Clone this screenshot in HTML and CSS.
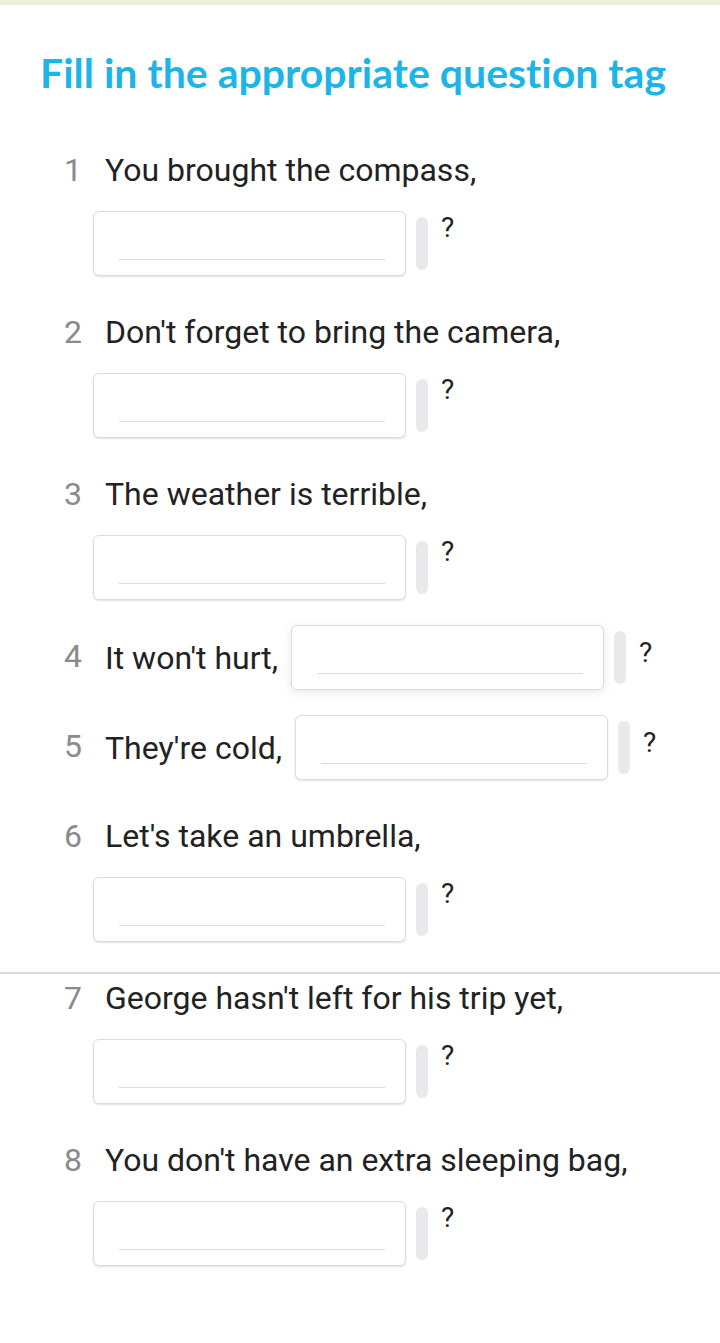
FILE: index.html
```html
<!DOCTYPE html>
<html lang="en">

<head>
    <meta charset="UTF-8" />
    <meta name="viewport" content="width=device-width, initial-scale=1.0" />
    <title>Question tags</title>
    <link rel="stylesheet" href="styles.css">
</head>

<body>
    <div class="top-bar"></div>

    <h1 class="title">Fill in the appropriate question tag</h1>

    <ol class="tasks">
        <li class="task">
            <span class="num">1</span>
            <div class="content">
                <span class="text">You brought the compass,</span>
                <span class="answer">
                    <span class="box"><span class="line"></span></span>
                    <span class="pill"></span>
                    <span class="mark">?</span>
                </span>
            </div>
        </li>
        <li class="task">
            <span class="num">2</span>
            <div class="content">
                <span class="text">Don't forget to bring the camera,</span>
                <span class="answer">
                    <span class="box"><span class="line"></span></span>
                    <span class="pill"></span>
                    <span class="mark">?</span>
                </span>
            </div>
        </li>
        <li class="task">
            <span class="num">3</span>
            <div class="content">
                <span class="text">The weather is terrible,</span>
                <span class="answer">
                    <span class="box"><span class="line"></span></span>
                    <span class="pill"></span>
                    <span class="mark">?</span>
                </span>
            </div>
        </li>
        <li class="task inline">
            <span class="num">4</span>
            <div class="content">
                <span class="text">It won't hurt,</span>
                <span class="answer">
                    <span class="box focus"><span class="line"></span></span>
                    <span class="pill"></span>
                    <span class="mark">?</span>
                </span>
            </div>
        </li>
        <li class="task inline">
            <span class="num">5</span>
            <div class="content">
                <span class="text">They're cold,</span>
                <span class="answer">
                    <span class="box"><span class="line"></span></span>
                    <span class="pill"></span>
                    <span class="mark">?</span>
                </span>
            </div>
        </li>
        <li class="task">
            <span class="num">6</span>
            <div class="content">
                <span class="text">Let's take an umbrella,</span>
                <span class="answer">
                    <span class="box"><span class="line"></span></span>
                    <span class="pill"></span>
                    <span class="mark">?</span>
                </span>
            </div>
        </li>
        <li class="rule"></li>
        <li class="task">
            <span class="num">7</span>
            <div class="content">
                <span class="text">George hasn't left for his trip yet,</span>
                <span class="answer">
                    <span class="box"><span class="line"></span></span>
                    <span class="pill"></span>
                    <span class="mark">?</span>
                </span>
            </div>
        </li>
        <li class="task">
            <span class="num">8</span>
            <div class="content">
                <span class="text">You don't have an extra sleeping bag,</span>
                <span class="answer">
                    <span class="box"><span class="line"></span></span>
                    <span class="pill"></span>
                    <span class="mark">?</span>
                </span>
            </div>
        </li>
    </ol>
</body>

</html>
```

FILE: styles.css
```css
/* Global */
body {
    margin: 0;
    background: #fff;
    color: #222;
    font-family: Roboto, 'Liberation Sans', sans-serif;
}

.top-bar {
    height: 5px;
    background: #efeddc;
}

/* Title */
.title {
    margin: 45px 0 0 40px;
    font-family: Lato, 'Open Sans', sans-serif;
    font-weight: 700;
    font-size: 41px;
    line-height: 46px;
    font-variant-ligatures: none;
    color: #1db4e8;
}

/* Task list */
.tasks {
    list-style: none;
    margin: 43px 0 0;
    padding: 0 40px 0 64px;
}

.task {
    display: flex;
    margin-bottom: 25px;
}

.num {
    width: 29px;
    flex-shrink: 0;
    font-size: 32px;
    line-height: 62px;
    color: #8a8a8a;
}

.content {
    flex: 1;
    display: flex;
    flex-wrap: wrap;
    align-items: center;
    column-gap: 13px;
    row-gap: 10px;
}

.text {
    padding-left: 12px;
    font-size: 32px;
    line-height: 62px;
}

.answer {
    display: flex;
    align-items: flex-start;
}

.box {
    width: 313px;
    height: 65px;
    box-sizing: border-box;
    border: 1px solid #dcdcdc;
    border-radius: 6px;
    box-shadow: 0 1px 2px rgba(0, 0, 0, 0.12);
    display: flex;
    align-items: flex-end;
    padding: 0 20px 15px 25px;
    background: #fff;
}

.box.focus {
    box-shadow: 0 2px 10px rgba(0, 0, 0, 0.1);
}

.line {
    flex: 1;
    height: 1px;
    background: #dedede;
}

.pill {
    width: 12px;
    height: 53px;
    margin: 6px 0 0 10px;
    border-radius: 6px;
    background: #e7e9eb;
}

.mark {
    margin: 3px 0 0 13px;
    font-size: 28px;
    line-height: 28px;
}

.inline .mark {
    margin-top: 14px;
}

/* Seam between the two halves of the page */
.rule {
    height: 2px;
    background: #d9d9d9;
    margin: 30px -40px -7px -64px;
}
```
